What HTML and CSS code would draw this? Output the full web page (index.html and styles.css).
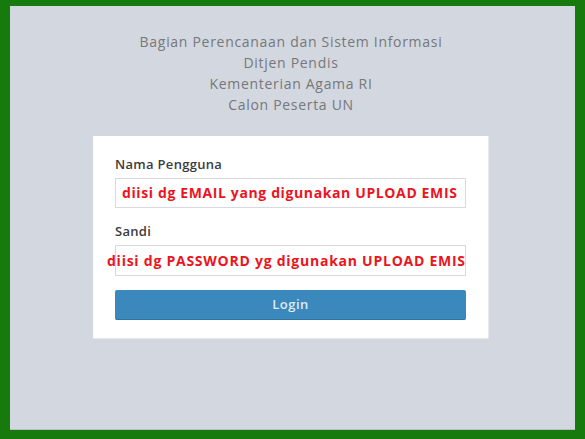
FILE: index.html
```html
<!DOCTYPE html>
<html>
<head>
<meta charset="utf-8">
<link rel="stylesheet" href="styles.css">
</head>
<body>
<div class="frame">
  <div class="panel">
    <div class="heading">
      <div>Bagian Perencanaan dan Sistem Informasi</div>
      <div>Ditjen Pendis</div>
      <div>Kementerian Agama RI</div>
      <div>Calon Peserta UN</div>
    </div>
    <div class="card">
      <div class="label">Nama Pengguna</div>
      <div class="input">
        <span class="note note-email">diisi dg EMAIL yang digunakan UPLOAD EMIS</span>
      </div>
      <div class="label label-2">Sandi</div>
      <div class="input input-2">
        <span class="note note-pass">diisi dg PASSWORD yg digunakan UPLOAD EMIS</span>
      </div>
      <div class="button">Login</div>
    </div>
  </div>
</div>
</body>
</html>
```

FILE: styles.css
```css
html, body {
  margin: 0;
  padding: 0;
}
body {
  width: 585px;
  height: 439px;
  font-family: "Open Sans", "Liberation Sans", sans-serif;
}
.frame {
  box-sizing: border-box;
  width: 585px;
  height: 439px;
  background: #167a0c;
  padding: 6px 10px 9px 10px;
  display: flex;
}
.panel {
  flex: 1;
  background: #d3d7df;
  border-bottom: 1px solid #b9bdc4;
  padding-top: 25px;
}
.heading {
  text-align: center;
  color: #76787b;
  font-size: 14px;
  letter-spacing: 0.7px;
  line-height: 21px;
  padding-right: 3px;
}
.card {
  width: 351px;
  margin: 21px 0 0 83px;
  background: #fff;
  padding: 19px 22px 18px 22px;
  border-right: 1px solid #e6e8ec;
  border-bottom: 1px solid #e6e8ec;
}
.label {
  font-size: 13px;
  letter-spacing: 0.3px;
  font-weight: 600;
  color: #3c3c3c;
  line-height: 18px;
}
.label-2 {
  margin-top: 14px;
}
.input {
  position: relative;
  box-sizing: border-box;
  height: 30px;
  margin-top: 5px;
  border: 1px solid #d6d9df;
  background: #fff;
}
.input-2 {
  height: 31px;
}
.note {
  position: absolute;
  top: 50%;
  transform: translateY(-50%);
  white-space: nowrap;
  color: #ec1421;
  font-weight: 700;
  font-size: 14px;
  line-height: 18px;
}
.note-email {
  left: 6px;
  letter-spacing: 0.62px;
}
.note-pass {
  left: -9px;
  letter-spacing: 0.75px;
}
.button {
  margin-top: 14px;
  height: 30px;
  border-radius: 2px;
  background: #3a88bc;
  border-bottom: 1px solid #2f73a2;
  box-sizing: border-box;
  color: #dfeaf2;
  font-size: 13px;
  letter-spacing: 0.5px;
  font-weight: 600;
  text-align: center;
  line-height: 29px;
}
```
